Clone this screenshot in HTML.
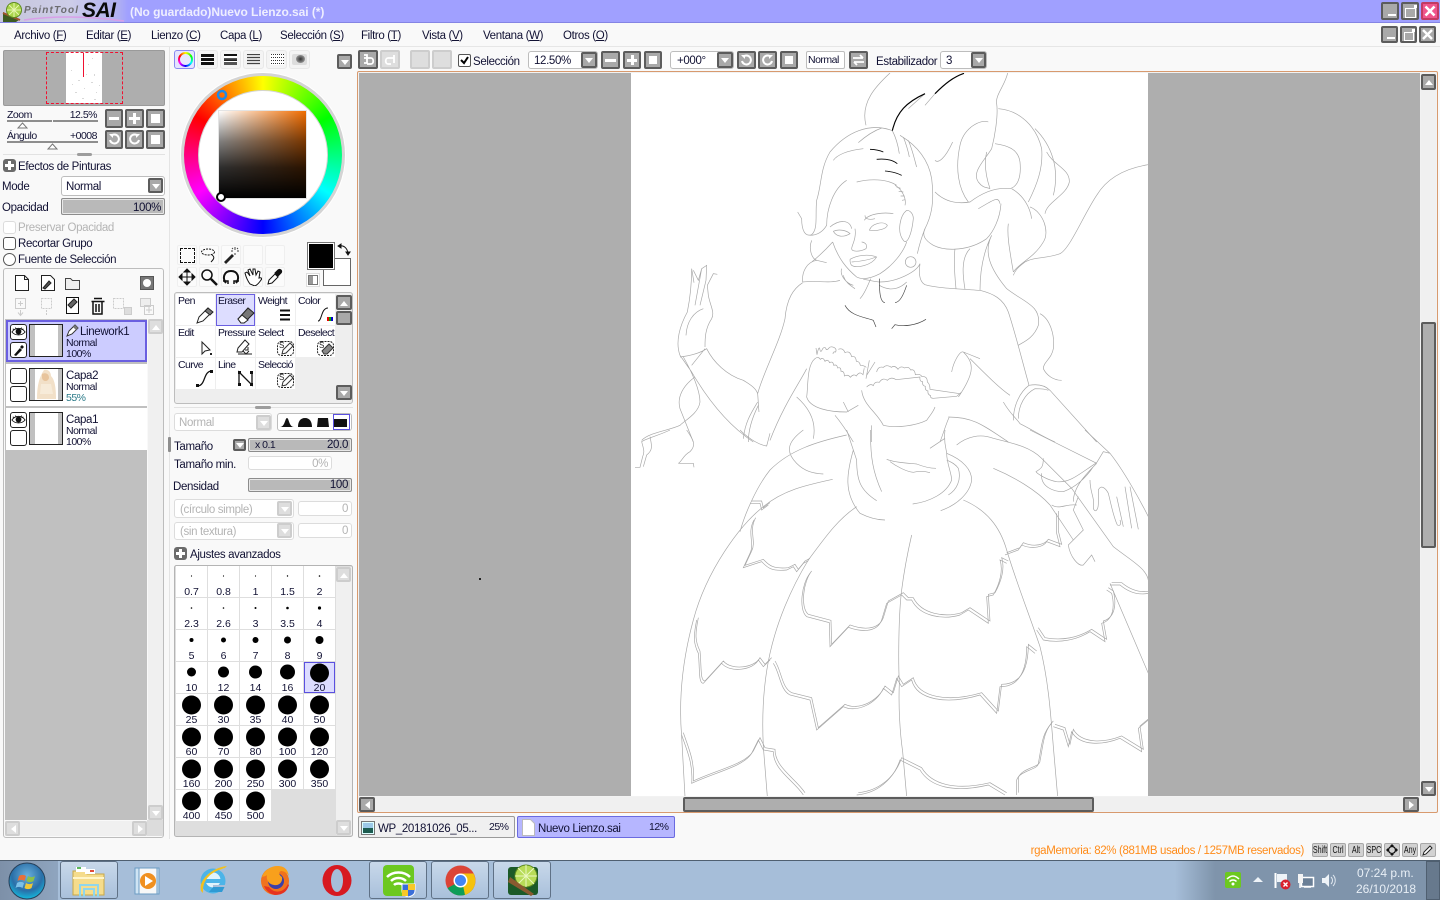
<!DOCTYPE html>
<html lang="es"><head><meta charset="utf-8"><title>PaintTool SAI</title>
<style>
html,body{margin:0;padding:0;width:1440px;height:900px;overflow:hidden;background:#f9f9f9}
body{position:relative;font:11.5px/14px "Liberation Sans",sans-serif;color:#111133;letter-spacing:-.35px}
div,span.t,svg.a{position:absolute}
.t{position:absolute;white-space:nowrap;line-height:14px;transform:translateY(1px)}
.n{transform:none;letter-spacing:0}
.sm{transform:none;font-size:10.5px;letter-spacing:-.5px}
.tl{transform:none;font-size:10.5px;letter-spacing:-.6px}
.g{color:#b4b4b4}
.b{position:absolute;box-sizing:border-box;background:#a9a9a9;border:2px solid #5c5c5c;border-radius:2px}
.off{background:#dedede;border-color:#cdcdcd}
.m::before{content:"";position:absolute;left:2px;right:2px;top:calc(50% - 1.5px);height:3px;background:#fff}
.p::after{content:"";position:absolute;top:2px;bottom:2px;left:calc(50% - 1.5px);width:3px;background:#fff}
.s::before{content:"";position:absolute;inset:3px;background:#fff}
.dn::before,.up::before{content:"";position:absolute;left:calc(50% - 4px);top:calc(50% - 2px);border-left:4px solid transparent;border-right:4px solid transparent}
.dn::before{border-top:5px solid #fff}
.up::before{border-bottom:5px solid #fff}
.lf::before,.rt::before{content:"";position:absolute;top:calc(50% - 4px);left:calc(50% - 2px);border-top:4px solid transparent;border-bottom:4px solid transparent}
.lf::before{border-right:5px solid #fff}
.rt::before{border-left:5px solid #fff}
.box{position:absolute;box-sizing:border-box;background:#fff;border:1px solid #bdbdbd;border-radius:3px}
.bar{position:absolute;box-sizing:border-box;background:#b9b9b9;border:1px solid #8c8c8c;border-radius:2px;box-shadow:inset 0 0 0 1px #e8e8e8}
.cell{position:absolute;width:39px;height:31px;background:#fff}
.tb{position:absolute;top:861px;width:58px;height:38px;box-sizing:border-box;border:1px solid #5f7186;border-radius:3px;background:linear-gradient(#c8d8ea,#a9c0db)}
.key{position:absolute;top:843px;height:14px;box-sizing:border-box;background:#d2d2d2;border:1px solid #a8a8a8;border-radius:2px;font:10.5px/12px "Liberation Sans",sans-serif;color:#111;letter-spacing:0}
.key span{position:absolute;left:50%;top:0;white-space:nowrap;transform:translateX(-50%) scaleX(.68)}
.ic{position:absolute;width:20px;height:20px;box-sizing:border-box;border:1px solid #efefef;border-radius:2px;background:#fbfbfb}
u{text-underline-offset:1px}
</style></head><body>

<!-- title bar -->
<div style="left:0;top:0;width:1440px;height:22px;background:linear-gradient(90deg,#c6c6dc 0,#cdcde8 70px,#b0b0f2 118px,#a0a0ff 128px);border-bottom:1px solid #8484e4"></div>
<svg class="a" style="left:2px;top:2px" width="125" height="21" viewBox="0 0 125 21">
<path d="M1 10l16 8-3 2H1z" fill="#3c5a22"/><path d="M1 11l17 7" stroke="#a0522d" stroke-width="2"/>
<circle cx="12" cy="8" r="7.5" fill="#a9d44a" stroke="#5d8a20"/><path d="M12 1v14M5 8h14M7 3l10 10M17 3L7 13" stroke="#e8f6b0"/>
<path d="M22 18C50 14 85 14 122 19" stroke="#d8a0e8" stroke-width="1.5" fill="none"/></svg>
<span class="t" style="left:24px;top:3px;font:italic bold 10px/14px 'Liberation Sans',sans-serif;color:#6c6c70;letter-spacing:1.1px">PaintTool</span>
<span class="t n" style="left:82px;top:1px;font:italic bold 21px/20px 'Liberation Sans',sans-serif;color:#0a0a0a;letter-spacing:-.5px">SAI</span>
<span class="t n" style="left:130px;top:5px;font-weight:bold;font-size:12px;color:#eeeeff;letter-spacing:-.05px">(No guardado)Nuevo Lienzo.sai (*)</span>
<div class="b" style="left:1381px;top:2px;width:18px;height:18px"><div style="left:5px;top:10px;width:8px;height:2px;background:#fff"></div></div>
<div class="b" style="left:1401px;top:2px;width:18px;height:18px"><div style="left:2px;top:4px;width:9px;height:8px;border:1px solid #fff"></div><div style="left:11px;top:1px;width:3px;height:3px;background:#fff"></div></div>
<div class="b" style="left:1421px;top:2px;width:18px;height:18px;background:#f0558c;border-color:#c23a62"><svg class="a" style="left:0;top:0" width="14" height="14"><path d="M2.5 2.5l9 9M11.5 2.5l-9 9" stroke="#fff" stroke-width="2.6"/></svg></div>

<!-- menu -->
<div style="left:0;top:46px;width:1440px;height:1px;background:#e6e6e6"></div>
<span class="t" style="left:14px;top:28px">Archivo (<u>F</u>)</span>
<span class="t" style="left:86px;top:28px">Editar (<u>E</u>)</span>
<span class="t" style="left:151px;top:28px">Lienzo (<u>C</u>)</span>
<span class="t" style="left:220px;top:28px">Capa (<u>L</u>)</span>
<span class="t" style="left:280px;top:28px">Selección (<u>S</u>)</span>
<span class="t" style="left:361px;top:28px">Filtro (<u>T</u>)</span>
<span class="t" style="left:422px;top:28px">Vista (<u>V</u>)</span>
<span class="t" style="left:483px;top:28px">Ventana (<u>W</u>)</span>
<span class="t" style="left:563px;top:28px">Otros (<u>O</u>)</span>
<div class="b" style="left:1381px;top:26px;width:17px;height:17px"><div style="left:4px;top:9px;width:8px;height:2px;background:#fff"></div></div>
<div class="b" style="left:1400px;top:26px;width:17px;height:17px"><div style="left:2px;top:4px;width:8px;height:7px;border:1px solid #fff"></div><div style="left:10px;top:1px;width:3px;height:3px;background:#fff"></div></div>
<div class="b" style="left:1419px;top:26px;width:17px;height:17px"><svg class="a" style="left:0;top:0" width="13" height="13"><path d="M2 2l9 9M11 2l-9 9" stroke="#fff" stroke-width="2.4"/></svg></div>

<!-- navigator -->
<div style="left:3px;top:50px;width:160px;height:54px;background:#aeaeae;border:1px solid #9a9a9a;border-radius:2px"></div>
<div style="left:66px;top:52px;width:36px;height:51px;background:#fff"></div>
<svg class="a" style="left:66px;top:52px" width="36" height="51"><g fill="#d8d8d8"><rect x="5" y="18" width="1" height="1"/><rect x="12" y="28" width="2" height="1"/><rect x="22" y="12" width="1" height="1"/><rect x="28" y="22" width="1" height="2"/><rect x="9" y="40" width="2" height="1"/><rect x="18" y="36" width="1" height="1"/><rect x="30" y="40" width="1" height="1"/><rect x="25" y="30" width="2" height="1"/><rect x="16" y="46" width="2" height="1"/><rect x="6" y="32" width="1" height="1"/><rect x="20" y="22" width="1" height="1"/><rect x="33" y="33" width="1" height="1"/><rect x="26" y="6" width="1" height="1"/><rect x="28" y="47" width="2" height="1"/></g></svg>
<div style="left:46px;top:52px;width:75px;height:50px;border:1px dashed #f01030"></div>
<div style="left:83px;top:53px;width:1px;height:24px;background:#f01030"></div>

<span class="t sm" style="left:7px;top:108px">Zoom</span>
<span class="t sm" style="left:68px;top:108px;width:29px;text-align:right">12.5%</span>
<div style="left:7px;top:120px;width:45px;height:2px;background:#8e8e8e"></div><div style="left:53px;top:120px;width:45px;height:2px;background:#8e8e8e"></div>
<svg class="a" style="left:17px;top:122px" width="11" height="7"><path d="M5.5 1L10 6H1z" fill="#fff" stroke="#777"/></svg>
<span class="t sm" style="left:7px;top:129px">Ángulo</span>
<span class="t sm" style="left:68px;top:129px;width:29px;text-align:right">+0008</span>
<div style="left:7px;top:141px;width:91px;height:2px;background:#8e8e8e"></div>
<svg class="a" style="left:47px;top:143px" width="11" height="7"><path d="M5.5 1L10 6H1z" fill="#fff" stroke="#777"/></svg>
<div class="b m" style="left:105px;top:109px;width:18px;height:19px"></div>
<div class="b m p" style="left:125px;top:109px;width:19px;height:19px"></div>
<div class="b s" style="left:146px;top:109px;width:19px;height:19px"></div>
<div class="b" style="left:105px;top:130px;width:18px;height:19px"><svg class="a" style="left:1px;top:1px" width="12" height="13"><path d="M3 3a4.5 4.5 0 1 1-1 4" fill="none" stroke="#fff" stroke-width="2"/><path d="M1 1h4v4z" fill="#fff"/></svg></div>
<div class="b" style="left:125px;top:130px;width:19px;height:19px"><svg class="a" style="left:1px;top:1px" width="13" height="13"><path d="M10 3a4.5 4.5 0 1 0 1 4" fill="none" stroke="#fff" stroke-width="2"/><path d="M12 1H8v4z" fill="#fff"/></svg></div>
<div class="b s" style="left:146px;top:130px;width:19px;height:19px"></div>

<div style="left:3px;top:154px;width:162px;height:1px;background:#e2e2e2"></div>
<div style="left:77px;top:153px;width:15px;height:3px;background:#9d9d9d;border-radius:2px"></div>

<div style="left:3px;top:159px;width:13px;height:13px;background:#6b6b6b;border-radius:3px"><div style="left:2px;top:5px;width:9px;height:3px;background:#fff"></div><div style="left:5px;top:2px;width:3px;height:9px;background:#fff"></div></div>
<span class="t" style="left:18px;top:159px">Efectos de Pinturas</span>
<span class="t" style="left:2px;top:179px">Mode</span>
<div class="box" style="left:61px;top:176px;width:104px;height:20px"></div>
<span class="t" style="left:66px;top:179px">Normal</span>
<div class="b dn" style="left:148px;top:178px;width:15px;height:15px"></div>
<span class="t" style="left:2px;top:200px">Opacidad</span>
<div class="bar" style="left:61px;top:198px;width:104px;height:17px"></div>
<span class="t" style="left:100px;top:200px;width:61px;text-align:right">100%</span>
<div class="box" style="left:3px;top:221px;width:13px;height:13px;border-color:#dcdcdc"></div>
<span class="t g" style="left:18px;top:220px">Preservar Opacidad</span>
<div class="box" style="left:3px;top:237px;width:13px;height:13px;border-color:#555"></div>
<span class="t" style="left:18px;top:236px">Recortar Grupo</span>
<div class="box" style="left:3px;top:253px;width:13px;height:13px;border-color:#555;border-radius:50%"></div>
<span class="t" style="left:18px;top:252px">Fuente de Selección</span>

<!-- layer panel -->
<div style="left:3px;top:268px;width:161px;height:570px;box-sizing:border-box;border:1px solid #bdbdbd;border-radius:3px"></div>
<svg class="a" style="left:10px;top:272px" width="150" height="46" fill="none" stroke="#222">
<path d="M5.5 3.5h9l4 4v11h-13zM14.5 3.5v4h4" fill="#fff"/>
<path d="M31.5 3.5h9l4 4v11h-13z" fill="#fff"/><path d="M33 16l6-7 2 2-6 6z" fill="#555"/>
<path d="M55.5 6.5h5l2 2h7v9h-14z" fill="#eee" stroke="#444"/>
<rect x="130.5" y="4.5" width="13" height="13" fill="#777" stroke="#555"/><circle cx="137" cy="11" r="4" fill="#fff" stroke="none"/>
<g stroke="#ccc"><path d="M5.5 26.5h10v10h-10zM10.5 38v5M8 40.5l2.5 3 2.5-3M8 31.5h5M10.5 29v5"/><path stroke-dasharray="2 1" d="M31.5 26.5h10v10h-10zM36.5 38v5"/><path stroke-dasharray="2 1" d="M103.5 26.5h10v10h-10z"/><rect x="114.5" y="35.5" width="7" height="7" fill="#ddd"/><path d="M130.5 26.5h10v8h-10z" fill="#eee"/><path d="M134.5 33.5h9v9h-9zM136 38h6M139 35v6"/></g>
<path d="M56.5 25.5h12v16h-12z" fill="#fff" stroke="#111"/><path d="M58 33l6-6 3 3-6 6z" fill="#666"/>
<path d="M81.5 29.5h13M84 26.5h8M83 30v12h9V30M86 32v8M89 32v8" stroke="#111" stroke-width="1.5"/>
</svg>
<div style="left:5px;top:319px;width:142px;height:501px;background:#c0c0c0"></div>
<div style="left:6px;top:320px;width:141px;height:42px;box-sizing:border-box;background:#ccccff;border:2px solid #6a5fe0"></div>
<div style="left:6px;top:364px;width:141px;height:42px;background:#fff"></div>
<div style="left:6px;top:408px;width:141px;height:42px;background:#fff"></div>
<svg width="0" height="0" style="position:absolute"><defs><symbol id="eye" viewBox="0 0 17 15"><path d="M1 7.5C5 2 12 2 16 7.5 12 12 5 12 1 7.5z" fill="#fff" stroke="#111"/><circle cx="8.5" cy="7" r="3.3" fill="#111"/><path d="M2 4l2 1M14 4l-2 1M5 2.5l1 2M12 2.5l-1 2" stroke="#111"/></symbol></defs></svg>
<div class="box" style="left:10px;top:324px;width:17px;height:16px;border-color:#222"><svg class="a" style="left:0;top:0" width="15" height="14"><use href="#eye"/></svg></div>
<div class="box" style="left:10px;top:342px;width:17px;height:16px;border-color:#222"><svg class="a" style="left:0;top:0" width="15" height="14"><path d="M3 12l6-7 2 2-6 6zM9 4l2-2 2 2-2 2z" fill="#111"/></svg></div>
<div style="left:29px;top:324px;width:34px;height:33px;box-sizing:border-box;background:linear-gradient(90deg,#c0c0c0 5px,#fff 5px,#fff 28px,#c0c0c0 28px);border:1px solid #222"></div>
<svg class="a" style="left:66px;top:323px" width="14" height="14"><path d="M1 13l2-5 6-6 3 3-6 6z" fill="#fff" stroke="#333"/><path d="M7 4l3 3 2-2-3-3z" fill="#777"/></svg>
<span class="t" style="left:80px;top:324px">Linework1</span>
<span class="t sm" style="left:66px;top:336px">Normal</span>
<span class="t sm" style="left:66px;top:347px">100%</span>

<div class="box" style="left:10px;top:368px;width:17px;height:16px;border-color:#222"></div>
<div class="box" style="left:10px;top:386px;width:17px;height:16px;border-color:#222"></div>
<div style="left:29px;top:368px;width:34px;height:33px;box-sizing:border-box;background:linear-gradient(90deg,#c0c0c0 5px,#fff 5px,#fff 28px,#c0c0c0 28px);border:1px solid #222"></div>
<svg class="a" style="left:35px;top:369px" width="22" height="31"><path d="M9 1c4-1 7 2 7 6 3 3 5 9 5 23H2C2 20 3 10 9 1z" fill="#f2e0c8"/><path d="M7 5c4-2 7 0 7 4-1 4-6 4-7 0z" fill="#e8c49c"/><path d="M6 15h10l2 10H5z" fill="#f7ebd9"/></svg>
<span class="t" style="left:66px;top:368px">Capa2</span>
<span class="t sm" style="left:66px;top:380px">Normal</span>
<span class="t sm" style="left:66px;top:391px;color:#2a7a88">55%</span>

<div class="box" style="left:10px;top:412px;width:17px;height:16px;border-color:#222"><svg class="a" style="left:0;top:0" width="15" height="14"><use href="#eye"/></svg></div>
<div class="box" style="left:10px;top:430px;width:17px;height:16px;border-color:#222"></div>
<div style="left:29px;top:412px;width:34px;height:33px;box-sizing:border-box;background:linear-gradient(90deg,#c0c0c0 5px,#fff 5px,#fff 28px,#c0c0c0 28px);border:1px solid #222"></div>
<span class="t" style="left:66px;top:412px">Capa1</span>
<span class="t sm" style="left:66px;top:424px">Normal</span>
<span class="t sm" style="left:66px;top:435px">100%</span>

<div style="left:148px;top:319px;width:15px;height:501px;background:#f0f0f0"></div>
<div class="b off up" style="left:148px;top:319px;width:15px;height:15px"></div>
<div class="b off dn" style="left:148px;top:805px;width:15px;height:15px"></div>
<div style="left:5px;top:821px;width:142px;height:15px;background:#f0f0f0"></div>
<div style="left:147px;top:820px;width:16px;height:16px;background:#dcdcdc"></div>
<div class="b off lf" style="left:5px;top:821px;width:15px;height:15px"></div>
<div class="b off rt" style="left:132px;top:821px;width:15px;height:15px"></div>

<div style="left:169px;top:47px;width:1px;height:792px;background:#e4e4e4"></div>
<div style="left:168px;top:437px;width:3px;height:15px;background:#8e8e8e;border-radius:1px"></div>

<!-- colour tabs -->
<div class="box" style="left:174px;top:50px;width:21px;height:19px;background:#e4e4ff;border-color:#8a8af0"></div>
<div style="left:178px;top:52px;width:15px;height:15px;border-radius:50%;background:conic-gradient(#ff0,#0f0,#0ff,#00f,#f0f,#f00,#ff0)"><div style="left:2px;top:2px;width:11px;height:11px;border-radius:50%;background:#e8e8ff"></div></div>
<div class="box" style="left:197px;top:50px;width:21px;height:19px;border-color:#e8e8e8;background:#f4f4f4"><div style="left:3px;top:3px;width:13px;height:11px;background:linear-gradient(#111 3px,#fff 3px,#fff 4px,#111 4px,#111 7px,#fff 7px,#fff 8px,#111 8px)"></div></div>
<div class="box" style="left:220px;top:50px;width:21px;height:19px;border-color:#e8e8e8;background:#f4f4f4"><div style="left:3px;top:3px;width:13px;height:11px;background:linear-gradient(#111 2px,#fff 2px,#fff 4px,#666 4px,#111 7px,#fff 7px,#fff 8px,#555 8px)"></div></div>
<div class="box" style="left:243px;top:50px;width:21px;height:19px;border-color:#e8e8e8;background:#f4f4f4"><div style="left:3px;top:3px;width:13px;height:11px;background:repeating-linear-gradient(#444 0 1px,#ddd 1px 3px)"></div></div>
<div class="box" style="left:266px;top:50px;width:21px;height:19px;border-color:#e8e8e8;background:#f4f4f4"><div style="left:3px;top:3px;width:14px;height:11px;background:repeating-linear-gradient(90deg,#fff 0 1px,transparent 1px 2px),repeating-linear-gradient(#333 0 1px,#fff 1px 3px)"></div></div>
<div class="box" style="left:289px;top:50px;width:21px;height:19px;border-color:#e8e8e8;background:#f4f4f4"><div style="left:2px;top:3px;width:15px;height:11px;background:#ddd;border-radius:2px"><div style="left:4px;top:1px;width:9px;height:8px;border-radius:50%;background:radial-gradient(#333,#bbb)"></div></div></div>
<div class="b dn" style="left:337px;top:54px;width:15px;height:15px"></div>

<!-- wheel -->
<div style="left:180px;top:72px;width:166px;height:166px;border-radius:50%;background:#fff;border:0"></div>
<div style="left:181px;top:73px;width:164px;height:164px;border-radius:50%;background:#d4d4d4"></div>
<div style="left:184px;top:76px;width:158px;height:158px;border-radius:50%;background:conic-gradient(#ff0,#0f0,#0ff,#00f,#f0f,#f00,#ff0)"></div>
<div style="left:198px;top:90px;width:130px;height:130px;border-radius:50%;background:#d4d4d4"></div>
<div style="left:199px;top:91px;width:128px;height:128px;border-radius:50%;background:#fff"></div>
<div style="left:218px;top:110px;width:89px;height:89px;background:#e4e4e4"></div>
<div style="left:219px;top:111px;width:87px;height:87px;background:linear-gradient(rgba(0,0,0,0),rgba(0,0,0,.5) 35%,rgba(0,0,0,.82) 65%,#000 100%),linear-gradient(90deg,#fff,#f06c00)"></div>
<svg class="a" style="left:215px;top:88px" width="14" height="14"><circle cx="7" cy="7" r="4" fill="none" stroke="#1e8ae6" stroke-width="2.5"/></svg>
<svg class="a" style="left:214px;top:190px" width="14" height="14"><circle cx="7" cy="7" r="4" fill="#fff" stroke="#000" stroke-width="2"/></svg>

<!-- tools -->
<div class="ic" style="left:177px;top:245px"><div style="left:2px;top:2px;width:13px;height:13px;border:1px dashed #111"></div></div>
<div class="ic" style="left:199px;top:245px"><svg class="a" style="left:0;top:0" width="18" height="18" fill="none" stroke="#111"><ellipse cx="8" cy="6" rx="6.5" ry="3" stroke-dasharray="2 1"/><path d="M12 9c3 2 2 4-1 7"/></svg></div>
<div class="ic" style="left:221px;top:245px"><svg class="a" style="left:0;top:0" width="18" height="18"><path d="M2 16l8-8 2 2-8 8z" fill="#222"/><path d="M13 1v3M13 7v2M9 5h2M15 5h2M10 2l1 1M16 2l-1 1" stroke="#444"/></svg></div>
<div class="ic" style="left:243px;top:245px"></div>
<div class="ic" style="left:265px;top:245px"></div>
<div class="ic" style="left:177px;top:267px"><svg class="a" style="left:0;top:0" width="18" height="18"><path d="M9 1v16M1 9h16M9 1L6 4h6zM9 17l-3-3h6zM1 9l3-3v6zM17 9l-3-3v6z" fill="#111" stroke="#111"/></svg></div>
<div class="ic" style="left:199px;top:267px"><svg class="a" style="left:0;top:0" width="18" height="18" fill="none" stroke="#111" stroke-width="1.5"><circle cx="7" cy="7" r="5"/><path d="M11 11l6 6" stroke-width="2.5"/></svg></div>
<div class="ic" style="left:221px;top:267px"><svg class="a" style="left:0;top:0" width="18" height="18" fill="none" stroke="#111" stroke-width="2"><path d="M4 15c-4-5-2-12 5-12s9 7 5 12"/><path d="M1 13h5v3M17 13h-5v3" stroke-width="1.5"/></svg></div>
<div class="ic" style="left:243px;top:267px"><svg class="a" style="left:0;top:0" width="18" height="18" fill="#fff" stroke="#111"><path d="M6 16C3 12 2 9 1 5l2-1 3 4-2-6 2-1 3 6V1l2 0 1 6 2-4 2 1-1 6c3-1 3 1 2 2-2 3-4 5-6 6z"/></svg></div>
<div class="ic" style="left:265px;top:267px"><svg class="a" style="left:0;top:0" width="18" height="18"><path d="M2 16l1-4 6-6 3 3-6 6z" fill="#fff" stroke="#111"/><path d="M9 5l3-3c2-2 5 1 3 3l-3 3z" fill="#111" stroke="#111"/></svg></div>

<div style="left:323px;top:258px;width:28px;height:28px;box-sizing:border-box;background:#fff;border:1px solid #666"></div>
<div style="left:307px;top:242px;width:28px;height:28px;box-sizing:border-box;background:#000;border:2px solid #fff;outline:1px solid #777;outline-offset:-1px"></div>
<svg class="a" style="left:337px;top:243px" width="14" height="14" fill="none" stroke="#111"><path d="M2 3c5-1 8 2 9 7"/><path d="M1 3l3-2v4zM11 12l-2-3h4z" fill="#111"/></svg>
<div style="left:306px;top:273px;width:14px;height:14px;box-sizing:border-box;border:1px solid #ddd;background:#fff"><div style="left:2px;top:2px;width:8px;height:8px;background:linear-gradient(90deg,#999 50%,#fff 50%);border:0;outline:1px solid #777"></div></div>

<!-- brush tools -->
<div style="left:174px;top:292px;width:179px;height:112px;box-sizing:border-box;background:#eeeeee;border:1px solid #bdbdbd;border-radius:3px"></div>
<div class="cell" style="left:176px;top:294px"></div><div class="cell" style="left:216px;top:294px;box-sizing:border-box;width:39px;height:32px;background:#ddddff;border:1px solid #6a5fe0"></div><div class="cell" style="left:256px;top:294px"></div><div class="cell" style="left:296px;top:294px"></div>
<div class="cell" style="left:176px;top:326px"></div><div class="cell" style="left:216px;top:326px"></div><div class="cell" style="left:256px;top:326px"></div><div class="cell" style="left:296px;top:326px"></div>
<div class="cell" style="left:176px;top:358px"></div><div class="cell" style="left:216px;top:358px"></div><div class="cell" style="left:256px;top:358px"></div>
<span class="t tl" style="left:178px;top:294px">Pen</span><span class="t tl" style="left:218px;top:294px">Eraser</span><span class="t tl" style="left:258px;top:294px">Weight</span><span class="t tl" style="left:298px;top:294px">Color</span>
<span class="t tl" style="left:178px;top:326px">Edit</span><span class="t tl" style="left:218px;top:326px">Pressure</span><span class="t tl" style="left:258px;top:326px">Select</span><span class="t tl" style="left:298px;top:326px">Deselect</span>
<span class="t tl" style="left:178px;top:358px">Curve</span><span class="t tl" style="left:218px;top:358px">Line</span><span class="t tl" style="left:258px;top:358px;width:37px;overflow:hidden">Selecció</span>
<svg class="a" style="left:176px;top:294px" width="160" height="96">
<g fill="#777" stroke="#222"><path d="M21 29l2-6 9-9 4 4-9 9z" fill="#fff"/><path d="M29 17l3-3 5 4-3 3z"/></g>
<path d="M62 25l10-11 6 5-10 10h-3z" fill="#777" stroke="#222"/><path d="M62 25l4-4 6 5-4 3h-3z" fill="#fff" stroke="#222"/>
<path d="M104 16.5h10M104 21h10M104 25.5h10" stroke="#111" stroke-width="2"/>
<path d="M142 27c4 0 3-13 10-13" fill="none" stroke="#111"/><rect x="151" y="23" width="2" height="4" fill="#e00"/><rect x="153" y="23" width="2" height="4" fill="#0a0"/><rect x="155" y="23" width="2" height="4" fill="#00c"/>
<path d="M26 48l8 8-5 1-3 3z" fill="#fff" stroke="#222"/><rect x="34" y="59" width="2" height="2" fill="#222"/>
<path d="M61 58l1-4 7-8 4 4-7 8zM62 60h14M69 56h3v-3M67 57l3 3 3-3" fill="#fff" stroke="#222"/>
<rect x="101.5" y="47.5" width="16" height="14" rx="4" fill="none" stroke="#222" stroke-dasharray="2 1"/><path d="M106 60l1-4 7-7 3 3-7 7z" fill="#fff" stroke="#333"/><text x="103" y="54" font-size="8" fill="#222" font-family="Liberation Sans">S</text>
<rect x="141.5" y="47.5" width="16" height="14" rx="4" fill="none" stroke="#222" stroke-dasharray="2 1"/><path d="M146 57l7-7 4 4-6 6h-3z" fill="#888" stroke="#333"/><text x="143" y="54" font-size="8" fill="#222" font-family="Liberation Sans">S</text>
<path d="M22 92c8-1 5-15 14-15" fill="none" stroke="#111" stroke-width="1.3"/><rect x="20" y="90" width="3" height="3" fill="#111"/><rect x="34" y="76" width="3" height="3" fill="#111"/>
<path d="M63 91V78l13 13V78" fill="none" stroke="#111" stroke-width="1.3"/><g fill="#111"><rect x="62" y="77" width="3" height="3"/><rect x="62" y="89" width="3" height="3"/><rect x="74" y="77" width="3" height="3"/><rect x="74" y="89" width="3" height="3"/></g>
<rect x="101.5" y="79.5" width="16" height="14" rx="4" fill="none" stroke="#222" stroke-dasharray="2 1"/><path d="M106 92l1-4 7-7 3 3-7 7z" fill="#fff" stroke="#333"/><text x="103" y="86" font-size="8" fill="#222" font-family="Liberation Sans">S</text>
</svg>
<div class="b up" style="left:336px;top:295px;width:16px;height:15px"></div>
<div class="b" style="left:336px;top:311px;width:16px;height:14px"></div>
<div class="b dn" style="left:336px;top:385px;width:16px;height:15px"></div>

<div style="left:174px;top:407px;width:179px;height:1px;background:#e2e2e2"></div>
<div style="left:255px;top:406px;width:16px;height:3px;background:#9d9d9d;border-radius:2px"></div>

<div class="box" style="left:174px;top:413px;width:98px;height:18px;border-color:#dcdcdc"></div>
<span class="t g" style="left:179px;top:415px">Normal</span>
<div class="b off dn" style="left:256px;top:415px;width:15px;height:15px"></div>
<div class="box" style="left:277px;top:413px;width:75px;height:18px"></div>
<svg class="a" style="left:280px;top:415px" width="70" height="15"><path d="M0 12C5 12 5 3 7 3s2 9 7 9zM18 12c0-5 2-9 7-9s7 4 7 9zM37 12l1-9h10l1 9z" fill="#111"/><rect x="54" y="4" width="13" height="8" fill="#111"/></svg>
<div style="left:333px;top:414px;width:17px;height:16px;box-sizing:border-box;border:1px solid #5a50e0"></div>

<span class="t" style="left:174px;top:439px">Tamaño</span>
<div class="b dn" style="left:233px;top:439px;width:13px;height:12px"></div>
<div class="bar" style="left:248px;top:438px;width:104px;height:14px"></div>
<span class="t sm" style="left:255px;top:438px">x 0.1</span>
<span class="t" style="left:300px;top:437px;width:48px;text-align:right">20.0</span>
<span class="t" style="left:174px;top:457px">Tamaño min.</span>
<div class="box" style="left:248px;top:456px;width:84px;height:14px;border-color:#dcdcdc"></div>
<span class="t g" style="left:280px;top:456px;width:48px;text-align:right">0%</span>
<span class="t" style="left:173px;top:479px">Densidad</span>
<div class="bar" style="left:248px;top:478px;width:104px;height:14px"></div>
<span class="t" style="left:300px;top:477px;width:48px;text-align:right">100</span>
<div class="box" style="left:174px;top:499px;width:120px;height:19px;border-color:#dcdcdc"></div>
<span class="t g" style="left:180px;top:502px">(círculo simple)</span>
<div class="b off dn" style="left:277px;top:501px;width:15px;height:15px"></div>
<div class="box" style="left:298px;top:501px;width:54px;height:15px;border-color:#dcdcdc"></div>
<span class="t g" style="left:300px;top:501px;width:48px;text-align:right">0</span>
<div class="box" style="left:174px;top:522px;width:120px;height:18px;border-color:#dcdcdc"></div>
<span class="t g" style="left:180px;top:524px">(sin textura)</span>
<div class="b off dn" style="left:277px;top:523px;width:15px;height:15px"></div>
<div class="box" style="left:298px;top:523px;width:54px;height:15px;border-color:#dcdcdc"></div>
<span class="t g" style="left:300px;top:523px;width:48px;text-align:right">0</span>
<div style="left:174px;top:547px;width:13px;height:13px;background:#6b6b6b;border-radius:3px"><div style="left:2px;top:5px;width:9px;height:3px;background:#fff"></div><div style="left:5px;top:2px;width:3px;height:9px;background:#fff"></div></div>
<span class="t" style="left:190px;top:547px">Ajustes avanzados</span>

<!-- brush size grid -->
<svg class="a" style="left:174px;top:565px;letter-spacing:0" width="179" height="273" font-family="Liberation Sans" font-size="10.5" text-anchor="middle" fill="#111133">
<rect x=".5" y=".5" width="178" height="271" fill="#dedede" stroke="#b4b4b4" rx="2"/>
<rect x="162" y="2" width="16" height="268" fill="#f0f0f0"/>
<g fill="#fff">
<rect x="2" y="1" width="31" height="31"/><rect x="34" y="1" width="31" height="31"/><rect x="66" y="1" width="31" height="31"/><rect x="98" y="1" width="31" height="31"/><rect x="130" y="1" width="31" height="31"/>
<rect x="2" y="33" width="31" height="31"/><rect x="34" y="33" width="31" height="31"/><rect x="66" y="33" width="31" height="31"/><rect x="98" y="33" width="31" height="31"/><rect x="130" y="33" width="31" height="31"/>
<rect x="2" y="65" width="31" height="31"/><rect x="34" y="65" width="31" height="31"/><rect x="66" y="65" width="31" height="31"/><rect x="98" y="65" width="31" height="31"/><rect x="130" y="65" width="31" height="31"/>
<rect x="2" y="97" width="31" height="31"/><rect x="34" y="97" width="31" height="31"/><rect x="66" y="97" width="31" height="31"/><rect x="98" y="97" width="31" height="31"/>
<rect x="2" y="129" width="31" height="31"/><rect x="34" y="129" width="31" height="31"/><rect x="66" y="129" width="31" height="31"/><rect x="98" y="129" width="31" height="31"/><rect x="130" y="129" width="31" height="31"/>
<rect x="2" y="161" width="31" height="31"/><rect x="34" y="161" width="31" height="31"/><rect x="66" y="161" width="31" height="31"/><rect x="98" y="161" width="31" height="31"/><rect x="130" y="161" width="31" height="31"/>
<rect x="2" y="193" width="31" height="31"/><rect x="34" y="193" width="31" height="31"/><rect x="66" y="193" width="31" height="31"/><rect x="98" y="193" width="31" height="31"/><rect x="130" y="193" width="31" height="31"/>
<rect x="2" y="225" width="31" height="31"/><rect x="34" y="225" width="31" height="31"/><rect x="66" y="225" width="31" height="31"/>
</g>
<rect x="130.5" y="97.5" width="30" height="30" fill="#dcdcff" stroke="#5a50e0"/>
<g fill="#000">
<circle cx="17.5" cy="11" r=".6"/><circle cx="49.5" cy="11" r=".6"/><circle cx="81.5" cy="11" r=".6"/><circle cx="113.5" cy="11" r=".7"/><circle cx="145.5" cy="11" r=".8"/>
<circle cx="17.5" cy="43" r=".8"/><circle cx="49.5" cy="43" r=".8"/><circle cx="81.5" cy="43" r="1"/><circle cx="113.5" cy="43" r="1.3"/><circle cx="145.5" cy="43" r="1.6"/>
<circle cx="17.5" cy="75" r="2"/><circle cx="49.5" cy="75" r="2.5"/><circle cx="81.5" cy="75" r="3"/><circle cx="113.5" cy="75" r="3.5"/><circle cx="145.5" cy="75" r="4"/>
<circle cx="17.5" cy="107" r="4.5"/><circle cx="49.5" cy="107" r="5.5"/><circle cx="81.5" cy="107" r="6.5"/><circle cx="113.5" cy="107" r="7.5"/><circle cx="145.5" cy="108" r="9.5"/>
<circle cx="17.5" cy="140" r="9.5"/><circle cx="49.5" cy="140" r="9.5"/><circle cx="81.5" cy="140" r="9.5"/><circle cx="113.5" cy="140" r="9.5"/><circle cx="145.5" cy="140" r="9.5"/>
<circle cx="17.5" cy="172" r="9.5"/><circle cx="49.5" cy="172" r="9.5"/><circle cx="81.5" cy="172" r="9.5"/><circle cx="113.5" cy="172" r="9.5"/><circle cx="145.5" cy="172" r="9.5"/>
<circle cx="17.5" cy="204" r="9.5"/><circle cx="49.5" cy="204" r="9.5"/><circle cx="81.5" cy="204" r="9.5"/><circle cx="113.5" cy="204" r="9.5"/><circle cx="145.5" cy="204" r="9.5"/>
<circle cx="17.5" cy="236" r="9.5"/><circle cx="49.5" cy="236" r="9.5"/><circle cx="81.5" cy="236" r="9.5"/>
</g>
<text x="17.5" y="30">0.7</text><text x="49.5" y="30">0.8</text><text x="81.5" y="30">1</text><text x="113.5" y="30">1.5</text><text x="145.5" y="30">2</text>
<text x="17.5" y="62">2.3</text><text x="49.5" y="62">2.6</text><text x="81.5" y="62">3</text><text x="113.5" y="62">3.5</text><text x="145.5" y="62">4</text>
<text x="17.5" y="94">5</text><text x="49.5" y="94">6</text><text x="81.5" y="94">7</text><text x="113.5" y="94">8</text><text x="145.5" y="94">9</text>
<text x="17.5" y="126">10</text><text x="49.5" y="126">12</text><text x="81.5" y="126">14</text><text x="113.5" y="126">16</text><text x="145.5" y="126">20</text>
<text x="17.5" y="158">25</text><text x="49.5" y="158">30</text><text x="81.5" y="158">35</text><text x="113.5" y="158">40</text><text x="145.5" y="158">50</text>
<text x="17.5" y="190">60</text><text x="49.5" y="190">70</text><text x="81.5" y="190">80</text><text x="113.5" y="190">100</text><text x="145.5" y="190">120</text>
<text x="17.5" y="222">160</text><text x="49.5" y="222">200</text><text x="81.5" y="222">250</text><text x="113.5" y="222">300</text><text x="145.5" y="222">350</text>
<text x="17.5" y="254">400</text><text x="49.5" y="254">450</text><text x="81.5" y="254">500</text>
</svg>
<div class="b off up" style="left:336px;top:567px;width:15px;height:15px"></div>
<div class="b off dn" style="left:336px;top:820px;width:15px;height:15px"></div>

<!-- top toolbar -->
<div class="b" style="left:358px;top:50px;width:20px;height:19px"><svg class="a" style="left:1px;top:1px" width="14" height="13"><path d="M3 2h3v8H3M3 5h7c3 0 3 6 0 6H6" fill="none" stroke="#fff" stroke-width="1.8"/></svg></div>
<div class="b off" style="left:380px;top:50px;width:20px;height:19px"><svg class="a" style="left:1px;top:1px" width="14" height="13"><path d="M11 2v8M11 5H5c-3 0-3 6 0 6h3" fill="none" stroke="#fff" stroke-width="1.8"/></svg></div>
<div class="b off" style="left:410px;top:50px;width:20px;height:19px"></div>
<div class="b off" style="left:432px;top:50px;width:20px;height:19px"></div>
<div class="box" style="left:458px;top:54px;width:13px;height:13px;border-color:#555;border-radius:2px"><svg class="a" style="left:0;top:0" width="11" height="11"><path d="M2 5l3 3 4-6" fill="none" stroke="#000" stroke-width="2"/></svg></div>
<span class="t" style="left:473px;top:54px">Selección</span>
<div class="box" style="left:528px;top:51px;width:70px;height:18px"></div>
<span class="t" style="left:534px;top:53px">12.50%</span>
<div class="b dn" style="left:581px;top:52px;width:16px;height:16px"></div>
<div class="b m" style="left:601px;top:51px;width:19px;height:18px"></div>
<div class="b m p" style="left:623px;top:51px;width:18px;height:18px"></div>
<div class="b s" style="left:644px;top:51px;width:18px;height:18px"></div>
<div class="box" style="left:670px;top:51px;width:64px;height:18px"></div>
<span class="t" style="left:677px;top:53px">+000°</span>
<div class="b dn" style="left:717px;top:52px;width:16px;height:16px"></div>
<div class="b" style="left:737px;top:51px;width:19px;height:18px"><svg class="a" style="left:1px;top:1px" width="13" height="12"><path d="M3 3a4.5 4.5 0 1 1-1 4" fill="none" stroke="#fff" stroke-width="2"/><path d="M1 1h4v4z" fill="#fff"/></svg></div>
<div class="b" style="left:758px;top:51px;width:19px;height:18px"><svg class="a" style="left:1px;top:1px" width="13" height="12"><path d="M10 3a4.5 4.5 0 1 0 1 4" fill="none" stroke="#fff" stroke-width="2"/><path d="M12 1H8v4z" fill="#fff"/></svg></div>
<div class="b s" style="left:780px;top:51px;width:18px;height:18px"></div>
<div class="box" style="left:806px;top:51px;width:39px;height:18px;border-radius:2px"></div>
<span class="t sm" style="left:808px;top:53px">Normal</span>
<div class="b" style="left:849px;top:51px;width:19px;height:18px"><svg class="a" style="left:1px;top:1px" width="13" height="12"><path d="M1 4h10M8 1l3 3M12 8H2M5 11L2 8" fill="none" stroke="#fff" stroke-width="1.8"/></svg></div>
<span class="t" style="left:876px;top:54px">Estabilizador</span>
<div class="box" style="left:940px;top:51px;width:47px;height:18px"></div>
<span class="t" style="left:946px;top:53px">3</span>
<div class="b dn" style="left:971px;top:52px;width:15px;height:16px"></div>

<!-- canvas area -->
<div style="left:357px;top:71px;width:1081px;height:742px;box-sizing:border-box;border:1px solid #d89a6e;border-radius:2px;background:#f2f2f2"></div>
<div style="left:359px;top:73px;width:1061px;height:723px;background:#aeaeae"></div>
<div style="left:631px;top:73px;width:517px;height:723px;background:#fff"></div>
<svg class="a" style="left:631px;top:73px" width="517" height="723" fill="none" stroke="#a6a6a6" stroke-width="2">
<g transform="translate(-1,-1) scale(.33333)">
<path d="M780 3C740 40 690 90 708 160M885 65L835 110M915 65L885 100M1133 3C1125 40 1095 70 1100 95C1105 130 1095 190 1085 230C1060 270 1025 300 1045 330C1060 350 1070 345 1080 350M1105 110C1170 115 1220 165 1235 230C1240 290 1220 340 1195 390M1075 150C1050 140 1000 170 990 220C975 290 985 350 1015 390M1095 215C1130 220 1165 230 1170 270C1175 320 1160 345 1140 350C1100 345 1060 360 1020 390C990 395 950 395 915 360M1070 240C1060 280 1070 320 1080 350M1110 395C1105 370 1090 385 1045 410M1113 395C1110 440 1090 480 1070 500C1020 535 950 540 910 520C885 505 875 490 885 470M1145 350C1180 370 1200 405 1205 440M1200 405C1240 420 1260 480 1240 510C1210 560 1170 570 1150 600M1135 455C1130 490 1140 540 1150 600M1085 490C1060 540 1080 590 1130 650C1180 690 1235 700 1225 760C1210 800 1180 810 1165 820M1555 278C1480 290 1430 320 1400 370C1360 430 1320 530 1290 545C1250 560 1210 555 1185 570C1165 585 1155 595 1150 610M1250 240C1270 280 1320 290 1318 330C1310 370 1250 390 1245 425M1215 170C1265 220 1290 290 1270 370M975 530C970 570 975 620 978 650M1020 530C990 560 1000 620 1005 652M1085 490C1060 540 1050 600 1050 655"/>
<path d="M787 176C720 150 650 180 600 240C570 290 575 340 560 385C555 430 565 470 545 488C525 495 515 475 515 440L503 420M650 325C610 350 590 410 590 460C575 485 555 490 540 490M700 230C650 235 620 250 610 265M685 212C710 190 735 175 755 168M787 176C800 200 805 225 808 245M820 195C830 220 835 240 838 255M835 205C850 240 855 270 860 285M810 190C860 220 895 260 905 320C915 400 900 440 885 470C875 495 870 510 862 545M915 265C925 275 945 260 968 210M680 330C720 320 770 320 800 340M795 340C815 350 830 380 825 400M800 345l12 4M806 358l14 2M812 372l12 0M816 385l10-2M600 465C630 440 660 445 665 470M675 470C680 500 665 520 665 530C665 540 690 540 708 530C715 515 700 510 695 510M608 510C625 560 650 590 680 615C700 625 725 618 750 605C790 580 820 540 830 510M830 415C810 430 800 480 820 505C830 520 845 490 850 440C850 425 840 415 830 415M703 445C715 425 760 420 790 425M705 430C705 440 715 445 735 440M718 475C725 455 760 445 772 460C770 470 745 478 718 475M610 478C625 470 650 475 660 485C640 497 620 495 610 478M660 562C680 550 715 545 740 555C725 580 680 590 665 580C660 575 660 565 660 562M665 570C690 568 715 565 738 555"/>
<circle cx="842" cy="570" r="16"/>
<path d="M635 590C628 610 650 635 670 640M640 610C645 630 660 640 675 650M870 575C860 600 800 630 750 630C740 630 720 625 700 622M722 620C710 650 700 670 690 680M748 640C790 665 820 640 830 630M518 630C515 600 530 570 560 565L590 572M545 505C535 530 545 560 560 565M608 510C590 530 570 550 545 570M518 630C560 625 600 635 630 625M870 575C865 610 870 630 885 638C920 648 970 650 1050 655C1090 665 1120 680 1135 720C1155 780 1175 860 1197 940M518 632C490 650 470 680 465 740C450 810 400 900 383 965C385 990 385 1000 387 1020M1230 725C1260 740 1275 790 1270 830C1265 860 1240 870 1240 890C1250 910 1270 925 1295 925"/>
<path d="M185 590C185 640 180 680 172 720C150 760 135 810 150 850L185 900M185 590L192 632M190 595L205 625L215 590L230 580L228 625L210 700M215 590L195 700M262 607L250 605L232 640L235 670C240 700 255 720 245 740C225 770 225 800 225 825M168 790C170 750 190 720 220 710M150 855C190 850 215 840 230 830C250 870 290 910 340 925C365 940 378 950 383 965M185 880L225 830M160 855C180 890 210 950 210 990C205 1025 165 1045 150 1060C120 1075 60 1080 35 1105M195 915C160 940 140 975 150 1010L190 1110M185 900C220 960 280 1050 370 1110M340 1100C345 1050 365 1020 383 990M355 1110C355 1070 370 1030 385 1000"/>
<path d="M558 828l3 20q4-22 8-20q2 18 8 4q4-8 10-4q2 10 10 0q4-6 14-2q10 4 6 14q-8-2-8 6M555 860q10-8 16 2q8-8 14 6q8-8 14 4q10-6 12 8q10-4 12 8q10-4 10 10q10-2 10 14q12-6 18 4q10-12 18-4q10-16 20-4q4-22 4-20M625 832q14-6 20 10q14-8 20 12q12-4 14 14q10 0 12 12q10 0 18 6M740 900q4-18 20-14q10-10 24 0q10-8 20 6q8-12 20-4q12-6 18 6q12-4 14 14q14-4 20 6q16-2 16 16q8 6 8 22L990 965M710 945q12-12 20-4q4-14 18-10q10-16 24-6q12-12 26-2l72-8q-2 14 8 14q-2 12 8 14q-2 12 8 14q-2 10 8 14q-2 8 8 8l70-6L995 960M555 860C530 880 535 940 530 975C540 1010 600 1020 650 1020L685 1000M640 990L655 1020M695 955C700 1000 740 1020 760 1060C800 1070 860 1060 890 1045C900 1030 910 1020 915 1005M965 900C970 870 990 835 1000 840C1020 860 1030 880 1020 910C1010 940 995 960 985 975M1000 840L1050 860M1020 860C1070 910 1110 950 1140 970M1120 990C1140 1025 1160 1040 1170 1055M1150 1045C1150 1000 1170 960 1197 940C1225 935 1245 940 1260 955L1400 1110M1165 1040C1165 1000 1185 965 1215 950C1230 950 1245 950 1255 955M1170 1055C1210 1075 1240 1095 1275 1110M530 890C510 930 460 1000 420 1105M500 975C540 1010 560 1050 550 1100M615 1030C640 1060 655 1085 670 1110M725 1060L725 1110M955 1035C1030 1035 1060 1060 1135 1110M930 1110C945 1070 950 1050 958 1035M718 865L708 920M735 870L710 910"/>
<g stroke="#000"><path stroke-width="3.5" d="M787 176C800 120 830 90 885 65M1002 4C970 15 945 35 915 65"/><path stroke-width="2.5" d="M720 232Q745 233 760 240M740 262Q780 258 802 275M765 297Q795 300 815 310"/><path stroke="#444" d="M748 620C748 660 750 690 765 692M830 640C820 670 810 690 795 692M645 700C660 730 700 735 730 745L738 765M785 770L795 758C820 765 860 760 888 742"/></g>
</g>
<g transform="translate(-1,357) scale(.33333)">
<path d="M120 0C90 15 50 25 35 35C40 55 45 65 38 80L30 112H15M60 20C65 45 70 60 50 75L40 110M170 0C190 30 200 45 180 65C160 75 155 95 145 100L190 100L192 112M330 0C360 30 390 45 410 48L420 10M520 0C480 30 460 60 500 100C525 125 550 130 580 132M650 15C560 35 480 60 420 120C380 170 345 250 330 305M608 148C530 165 460 180 400 230C330 285 230 420 190 570C160 680 145 800 155 920L165 1100M670 60C650 130 640 190 690 250C720 265 745 270 765 270M650 0L680 90C680 150 690 180 740 212M722 0C720 80 730 130 755 185M680 230C620 270 580 330 535 390C480 480 440 580 420 670C400 760 395 850 400 950L412 1100M845 315C830 380 820 440 815 480C805 560 805 700 808 760C805 830 810 910 818 965L830 1100M1000 210C1070 240 1110 290 1130 360C1160 460 1200 560 1230 650C1255 750 1262 850 1270 950L1283 1100"/>
<path d="M950 70C950 100 965 130 965 150C950 190 900 215 848 222M950 70C1000 90 1025 120 1025 150C1020 190 980 225 932 242M955 195C980 180 995 150 985 115C975 100 960 95 950 90M770 88C800 100 850 100 860 102C880 110 900 115 918 115M780 95C800 110 830 125 850 127C870 122 890 125 900 128M900 55L945 25M945 0C940 40 950 60 950 70M980 45C1010 20 1050 10 1090 25C1150 40 1200 50 1235 85M1090 115C1150 140 1220 180 1260 225L1330 330M1200 0L1400 100M1365 0L1440 70C1480 120 1530 210 1555 260M1400 98L1420 65L1440 70M1400 98C1350 130 1320 160 1280 155C1250 150 1220 130 1218 125C1235 115 1240 110 1240 85M1235 130C1230 170 1270 185 1300 185C1340 170 1370 140 1390 110M1235 85L1325 175L1450 350C1500 390 1560 420 1555 460M1330 215C1330 170 1370 130 1400 100M1380 150C1380 190 1395 200 1390 235C1395 250 1405 240 1405 220L1405 180C1415 160 1430 180 1435 190C1445 230 1450 260 1462 285C1475 290 1472 275 1470 270M1460 200L1480 290M1485 170L1505 295M1500 170L1525 298M1345 200L1330 240L1360 300L1315 345C1320 380 1345 410 1360 405L1385 375L1395 395M1265 225C1290 240 1310 220 1340 225M1440 460L1555 730"/>
<g id="sc"><path d="M372 270C350 310 375 340 360 370L340 413L395 395C410 410 420 425 470 420L490 410L500 425L520 400L535 392M360 220H390L395 240L415 225M540 430C515 460 505 540 530 560L598 578L600 650L655 592C690 605 740 610 755 570L770 520L815 495L830 510L845 510C870 560 940 570 990 555L1015 540L1075 580L1070 500L1090 495C1110 460 1120 420 1110 390L1130 400M1125 375L1165 360L1175 345C1210 360 1240 350 1250 335L1290 350L1280 310L1280 250M200 570C190 620 190 640 205 670C210 720 205 760 220 760L275 700C300 730 370 720 385 690L400 710L420 690M430 700C450 730 450 780 480 795L540 810L560 900L640 830C680 850 740 820 760 775L785 795L800 745L815 770L845 750C860 810 950 825 1050 795L1100 850L1110 770C1170 770 1190 720 1190 650L1215 670M1220 600L1240 630C1290 640 1340 630 1380 605L1425 635L1415 580C1450 570 1455 530 1445 490L1430 480M1440 465L1470 465C1500 490 1530 495 1555 490M155 915C170 960 190 1000 185 1060C260 1025 340 1010 365 970L385 930L400 960L430 965C430 1020 490 1050 520 1095M680 1095C740 1090 790 1050 810 990L870 1020C900 1070 970 1090 1075 1065L1125 1095M1265 880C1235 910 1235 950 1225 1000C1225 1020 1170 1020 1160 1050L1160 1095M1270 890L1300 900L1315 950L1325 905C1350 950 1420 945 1470 925L1535 965L1525 895L1555 870"/></g>
<use href="#sc" transform="translate(5,-7)"/>
</g>
</svg>
<div style="left:479px;top:578px;width:2px;height:2px;background:#222"></div>

<div class="b up" style="left:1421px;top:74px;width:15px;height:16px"></div>
<div style="left:1421px;top:90px;width:15px;height:691px;background:#f0f0f0"></div>
<div class="b" style="left:1421px;top:322px;width:15px;height:226px;background:#aeaeae"></div>
<div class="b dn" style="left:1421px;top:781px;width:15px;height:15px"></div>
<div style="left:359px;top:797px;width:1061px;height:14px;background:#f0f0f0"></div>
<div class="b lf" style="left:359px;top:797px;width:16px;height:15px"></div>
<div class="b" style="left:683px;top:797px;width:411px;height:15px;background:#aeaeae"></div>
<div class="b rt" style="left:1403px;top:797px;width:16px;height:15px"></div>

<!-- tabs -->
<div style="left:358px;top:816px;width:157px;height:22px;box-sizing:border-box;background:#f0f0f0;border:1px solid #9a9a9a;border-radius:2px"></div>
<svg class="a" style="left:361px;top:821px" width="14" height="14"><rect x=".5" y=".5" width="13" height="13" fill="#dff" stroke="#777"/><rect x="2" y="2" width="10" height="5" fill="#9cc9e8"/><rect x="2" y="7" width="10" height="5" fill="#1c5c50"/></svg>
<span class="t" style="left:378px;top:821px">WP_20181026_05...</span>
<span class="t sm" style="left:489px;top:820px">25%</span>
<div style="left:517px;top:816px;width:158px;height:22px;box-sizing:border-box;background:#b6b6ff;border:1px solid #6a6ae0;border-radius:2px"></div>
<svg class="a" style="left:522px;top:819px" width="13" height="17"><path d="M.5.5h8l4 4v12H.5z" fill="#fff" stroke="#bbb"/></svg>
<span class="t" style="left:538px;top:821px">Nuevo Lienzo.sai</span>
<span class="t sm" style="left:649px;top:820px">12%</span>

<!-- status -->
<div style="left:1031px;top:843px;width:273px;height:15px;overflow:hidden"><span class="t" style="right:0;top:0;color:#ff8c1a">CargaMemoria: 82% (881MB usados / 1257MB reservados)</span></div>
<div class="key" style="left:1312px;width:16px"><span>Shift</span></div>
<div class="key" style="left:1330px;width:16px"><span>Ctrl</span></div>
<div class="key" style="left:1348px;width:16px"><span>Alt</span></div>
<div class="key" style="left:1366px;width:16px"><span>SPC</span></div>
<div class="key" style="left:1384px;width:16px"><svg class="a" style="left:1px;top:0" width="12" height="12"><circle cx="6" cy="6" r="3.5" fill="none" stroke="#111" stroke-width="1.3"/><path d="M6 0l2 2H4zM6 12l2-2H4zM0 6l2-2v4zM12 6l-2-2v4z" fill="#111"/></svg></div>
<div class="key" style="left:1402px;width:16px"><span>Any</span></div>
<div class="key" style="left:1420px;width:16px"><svg class="a" style="left:1px;top:0" width="12" height="12"><path d="M1 11l1-3 6-6 2 2-6 6z" fill="#fff" stroke="#222"/></svg></div>

<!-- taskbar -->
<div style="left:0;top:860px;width:1440px;height:40px;background:linear-gradient(90deg,#a6bed9 0,#a6bed9 1175px,#7f94ab 1215px,#7f94ab 100%);border-top:1px solid #4f5f70;box-sizing:border-box"></div>
<div style="left:0;top:861px;width:58px;height:39px;background:linear-gradient(90deg,#7d90a8,#8fa5bf)"></div>
<svg class="a" style="left:8px;top:862px" width="38" height="38"><defs><radialGradient id="orb" cx=".5" cy=".35" r=".7"><stop offset="0" stop-color="#6ab0dc"/><stop offset=".6" stop-color="#2a6fa8"/><stop offset="1" stop-color="#10c8e8"/></radialGradient></defs><circle cx="19" cy="19" r="18" fill="url(#orb)" stroke="#28405a"/><path d="M11 14c2-1.5 5-1.5 7 0l-1.5 5c-2-1.5-5-1.5-7 0z" fill="#e8703a"/><path d="M20 14c2 1.5 5 1.5 7 0l-1.5 5c-2 1.5-5 1.5-7 0z" fill="#8cc04a"/><path d="M9 21c2-1.5 5-1.5 7 0l-1.5 5c-2-1.5-5-1.5-7 0z" fill="#7cc0e8"/><path d="M18 21c2 1.5 5 1.5 7 0l-1.5 5c-2 1.5-5 1.5-7 0z" fill="#f0c838"/></svg>

<div class="tb" style="left:60px"></div>
<svg class="a" style="left:72px;top:864px" width="34" height="34"><path d="M1 7h12l2 3h17v21H1z" fill="#f5dc8c" stroke="#c8a848"/><rect x="4" y="3" width="10" height="5" fill="#fff"/><rect x="5" y="3" width="4" height="2" fill="#5cb85c"/><rect x="13" y="5" width="10" height="5" fill="#fff"/><rect x="18" y="6" width="4" height="2" fill="#e04a3a"/><path d="M1 14h31" stroke="#fff5c8" stroke-width="2"/><path d="M8 33V21h18v12M12 33v-8h10v8" fill="none" stroke="#8fd6ec" stroke-width="2"/></svg>
<svg class="a" style="left:134px;top:866px" width="30" height="30"><rect x="1" y="2" width="24" height="26" fill="#cfe4f4" stroke="#6c9cc4"/><rect x="5" y="2" width="18" height="26" fill="#f8f8f8" stroke="#6c9cc4"/><circle cx="14" cy="15" r="8" fill="#f09020"/><path d="M11 10l8 5-8 5z" fill="#fff"/></svg>
<svg class="a" style="left:197px;top:864px" width="32" height="32"><circle cx="16" cy="17" r="12.5" fill="#4cb4e8"/><circle cx="16" cy="16" r="7.5" fill="#dff3fc"/><rect x="8" y="15" width="17" height="4" fill="#4cb4e8"/><path d="M17 22h11l-3 6H12z" fill="#2e9ad4"/><rect x="16" y="21" width="13" height="2" fill="#a6bed9"/><path d="M4 27C1 14 18 3 30 2c-4 4-2 1-5 3C14 8 5 16 6 29z" fill="#f0c020"/></svg>
<svg class="a" style="left:259px;top:864px" width="32" height="32"><circle cx="16" cy="17" r="14" fill="#f0721e"/><circle cx="17" cy="17" r="8" fill="#3b3fa8"/><path d="M3 13C6 4 16 0 24 3c4 2 5 5 6 9-2-3-5-5-8-5-3 1-2 4 1 6 1 5-3 9-8 8-6-1-8-6-7-10-1 1-2 1-5 2z" fill="#f8a01c"/><path d="M10 23c5 7 15 6 19-3l1 1c-2 7-7 10-14 10-5-1-9-4-11-9z" fill="#e6331f"/></svg>
<svg class="a" style="left:322px;top:864px" width="30" height="33"><ellipse cx="15" cy="16.5" rx="14.5" ry="15.5" fill="#d71920"/><ellipse cx="15" cy="16.5" rx="6" ry="11.5" fill="#a6bed9"/></svg>
<div class="tb" style="left:369px"></div>
<svg class="a" style="left:382px;top:864px" width="34" height="33"><rect x="1" y="1" width="31" height="31" rx="4" fill="#6cc820"/><path d="M5 13c6-6 17-6 23 0M9 17c4-4 11-4 15 0M12 21c2-2 7-2 9 0" fill="none" stroke="#fff" stroke-width="2.5"/><path d="M20 20h13v7c0 3-3 5-6.5 6-3.5-1-6.5-3-6.5-6z" fill="#3a6ed8" stroke="#fff"/><rect x="26" y="20" width="7" height="6" fill="#f8c828"/><rect x="20" y="26" width="6" height="6" fill="#f8c828"/></svg>
<div class="tb" style="left:431px"></div>
<svg class="a" style="left:445px;top:865px" width="31" height="31"><circle cx="15.5" cy="15.5" r="15" fill="#db4437"/><path d="M15.5 15.5L2.5 23a15 15 0 0 0 13 7.500 15 15 0 0 0 13-7.500z" fill="#0f9d58"/><path d="M15.5 8.5h13A15 15 0 0 1 20 30z" fill="#f4c20d"/><path d="M2.5 23L.5 15.5 3 7l7 12z" fill="#db4437"/><circle cx="15.5" cy="15.5" r="7" fill="#fff"/><circle cx="15.5" cy="15.5" r="5.5" fill="#4285f4"/></svg>
<div class="tb" style="left:493px"></div>
<svg class="a" style="left:507px;top:864px" width="32" height="33"><rect x="1" y="3" width="30" height="28" rx="3" fill="#1c5a28"/><circle cx="19" cy="12" r="11" fill="#b8dc58" stroke="#5d8a20"/><path d="M19 1v22M8 12h22M11 4l16 16M27 4L11 20" stroke="#eaf8c0"/><path d="M3 13l24 17-3 2L1 18z" fill="#8a5a30"/></svg>

<svg class="a" style="left:1225px;top:872px" width="16" height="16"><rect width="16" height="16" rx="2" fill="#6cc820"/><path d="M2 7c4-4 8-4 12 0M4.5 9.5c2-2 5-2 7 0" fill="none" stroke="#fff" stroke-width="1.5"/><circle cx="8" cy="12" r="1.5" fill="#fff"/></svg>
<svg class="a" style="left:1253px;top:877px" width="10" height="6"><path d="M5 0l5 5H0z" fill="#eef3f8"/></svg>
<svg class="a" style="left:1274px;top:873px" width="17" height="17"><path d="M1.5 0v15" stroke="#fff" stroke-width="2"/><path d="M3 1h10v8H3z" fill="#eef3f8"/><circle cx="11.5" cy="11.5" r="5" fill="#d8202c"/><path d="M9.5 9.5l4 4M13.5 9.5l-4 4" stroke="#fff" stroke-width="1.4"/></svg>
<svg class="a" style="left:1298px;top:873px" width="17" height="16"><rect x="3.5" y="4.5" width="12" height="9" fill="#6a7f96" stroke="#fff" stroke-width="1.5"/><rect x="0" y="1" width="5" height="9" fill="#f4f4f4"/><path d="M6 14h7M2 10v5" stroke="#fff" stroke-width="1.5"/></svg>
<svg class="a" style="left:1322px;top:873px" width="15" height="15"><path d="M0 5h3l4-4v13l-4-4H0z" fill="#eef3f8"/><path d="M9 4c2 2 2 5 0 7M11 2c3 3 3 8 0 11" fill="none" stroke="#dfe7ef"/></svg>
<span class="t n" style="left:1357px;top:866px;color:#e8eff6;font-size:12px">07:24 p.m.</span>
<span class="t n" style="left:1356px;top:882px;color:#e8eff6;font-size:12px">26/10/2018</span>
<div style="left:1426px;top:861px;width:14px;height:39px;box-sizing:border-box;border:1px solid #4f5f70;background:#67798d"></div>
</body></html>
